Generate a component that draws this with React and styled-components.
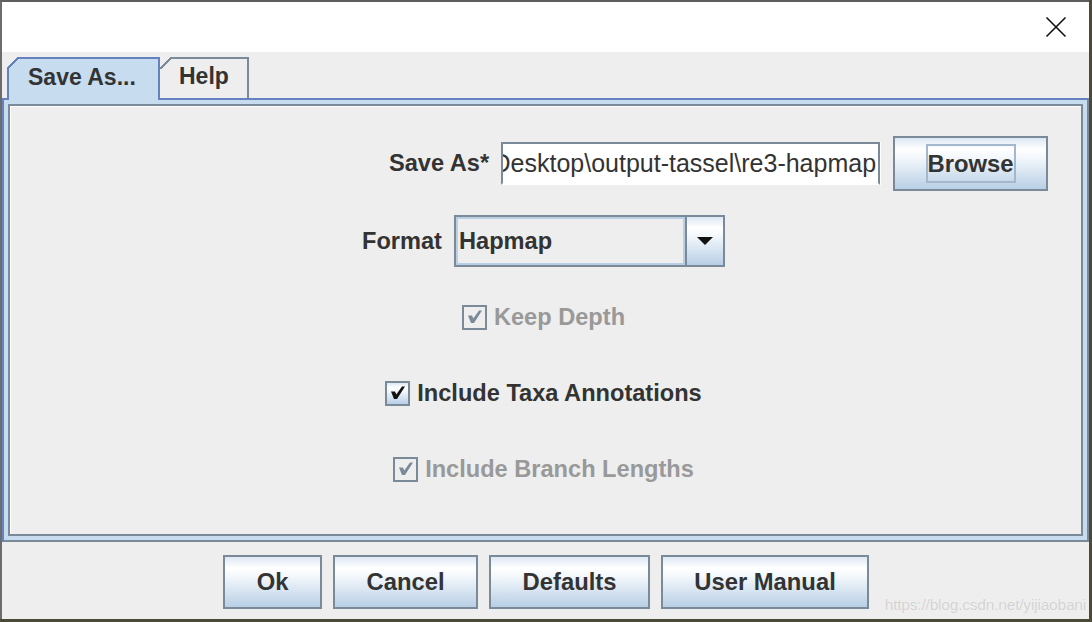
import React from "react";
import styled, { createGlobalStyle } from "styled-components";

const FONT_SIZE = "23.8px";
const LABEL_SIZE = "23.6px";

const GlobalStyle = createGlobalStyle`
  html, body {
    margin: 0;
    padding: 0;
    background-color: #4b4a38;
  }
  body {
    font-family: "Liberation Sans", Arial, sans-serif;
  }
`;

const Page = styled.div`
  position: relative;
  width: 1092px;
  height: 622px;
  overflow: hidden;
`;

const Window = styled.div`
  width: 1087px;
  height: 617px;
  border-left: 2px solid #6c6c6c;
  border-top: 2px solid #5e5e5e;
  background-color: #eeeeee;
  display: flex;
  flex-direction: column;
`;

const TitleBar = styled.div`
  height: 50px;
  background-color: #ffffff;
  display: flex;
  justify-content: flex-end;
  align-items: center;
  padding-right: 21px;
`;

const CloseButton = styled.div`
  width: 24px;
  height: 24px;
  display: flex;
  align-items: center;
  justify-content: center;
`;

const Body = styled.div`
  flex: 1;
  display: flex;
  flex-direction: column;
  padding-top: 5px;
`;

const TabStrip = styled.div`
  height: 41px;
  display: flex;
  align-items: flex-end;
  padding-left: 5px;
  position: relative;
  z-index: 1;
`;

const Tab = styled.div`
  position: relative;
  box-sizing: border-box;
  height: ${p => (p.selected ? "43px" : "41px")};
  margin-bottom: ${p => (p.selected ? "-2px" : "0")};
  width: ${p => p.width}px;
  padding-left: ${p => p.indent}px;
  border: 2px solid ${p => (p.selected ? "#6382bf" : "#7a8a99")};
  border-bottom: none;
  border-left: ${p => (p.selected ? "2px solid #6382bf" : "none")};
  background-color: ${p => (p.selected ? "#c8dcf0" : "#eeeeee")};
  font-weight: bold;
  font-size: 23px;
  color: #333333;
  display: flex;
  align-items: center;
  padding-bottom: 5px;

  &::before {
    content: "";
    position: absolute;
    top: -2px;
    left: ${p => (p.selected ? "-2px" : "0")};
    width: 12px;
    height: 12px;
    background: linear-gradient(
      135deg,
      #eeeeee 0 42%,
      ${p => (p.selected ? "#6382bf" : "#7a8a99")} 42% 58%,
      transparent 58%
    );
  }
`;

const Panel = styled.div`
  height: 444px;
  box-sizing: border-box;
  border: 2px solid #6382bf;
  border-right-color: #7a8a99;
  border-bottom-color: #7a8a99;
  background-color: #c8dcf0;
  padding: 4px;
  display: flex;
`;

const PanelInner = styled.div`
  flex: 1;
  border: 2px solid #7a8a99;
  box-shadow: inset 1px 1px 0 #ffffff;
  background-color: #eeeeee;
  display: flex;
  flex-direction: column;
  padding-top: 19px;
  padding-right: 4px;
`;

const Row = styled.div`
  height: 76px;
  flex-shrink: 0;
  display: flex;
  align-items: center;
  justify-content: center;
  padding-left: ${p => p.shift || 0}px;
  margin-bottom: ${p => p.after || 0}px;
  gap: 12px;
`;

const Label = styled.span`
  font-size: ${LABEL_SIZE};
  font-weight: bold;
  color: #333333;
`;

const TextField = styled.div`
  width: 379px;
  height: 43px;
  box-sizing: border-box;
  border: 2px solid #7a8a99;
  border-bottom-color: #ffffff;
  box-shadow: 1px 0 0 #ffffff;
  background-color: #ffffff;
  overflow: hidden;
  display: flex;
  justify-content: flex-end;
  align-items: center;
  padding-right: 2px;
  white-space: nowrap;
  font-size: 25px;
  color: #333333;
  margin-right: 1px;
`;

const gradient = `linear-gradient(
  to bottom,
  #dde8f3 0%,
  #ffffff 22%,
  #f4f8fc 38%,
  #b8cfe5 100%
)`;

const Button = styled.button`
  box-sizing: border-box;
  height: ${p => p.h || 54}px;
  width: ${p => p.w}px;
  border: 2px solid #7a8a99;
  background: ${gradient};
  font-family: "Liberation Sans", Arial, sans-serif;
  font-weight: bold;
  font-size: ${FONT_SIZE};
  color: #333333;
  padding: 0;
  display: flex;
  align-items: center;
  justify-content: center;
  cursor: pointer;
`;

const FocusRing = styled.span`
  border: 2px solid #a3b8cc;
  padding: 5px 0 4px 0;
  line-height: 26px;
`;

const Combo = styled.div`
  width: 271px;
  height: 52px;
  box-sizing: border-box;
  border: 2px solid #7a8a99;
  display: flex;
`;

const ComboText = styled.div`
  flex: 1;
  border: 2px solid #b8cfe5;
  background-color: #eeeeee;
  display: flex;
  align-items: center;
  padding-left: 1px;
  font-size: ${LABEL_SIZE};
  font-weight: bold;
  color: #333333;
`;

const ComboArrow = styled.div`
  width: 36px;
  border-left: 2px solid #7a8a99;
  background: ${gradient};
  display: flex;
  align-items: center;
  justify-content: center;
`;

const CheckRow = styled.label`
  display: flex;
  align-items: center;
  gap: 7px;
  font-size: ${LABEL_SIZE};
  font-weight: bold;
  color: ${p => (p.disabled ? "#999999" : "#333333")};
`;

const Box = styled.span`
  width: 25px;
  height: 25px;
  box-sizing: border-box;
  border: 2px solid #7a8a99;
  background: ${p => (p.disabled ? "#eeeeee" : gradient)};
  display: flex;
  align-items: center;
  justify-content: center;
`;

const ButtonBar = styled.div`
  display: flex;
  justify-content: center;
  gap: 11px;
  padding-top: 13px;
  padding-left: 1px;
`;

const Watermark = styled.div`
  position: absolute;
  right: 6px;
  bottom: 8px;
  font-family: "Liberation Sans", Arial, sans-serif;
  font-size: 15.5px;
  color: #d2d2d2;
  text-shadow: 0 0 1px #ffffff;
  letter-spacing: -0.2px;
`;

const CheckMark = ({ color }) => (
  <svg width="21" height="21" viewBox="0 0 21 21">
    <path d="M4 8.5 L8 8.5 L9.3 11.5 L15 3.5 L18 3.5 L10 16 L7 16 Z" fill={color} />
  </svg>
);

const CheckBox = ({ label, disabled }) => (
  <CheckRow disabled={disabled}>
    <Box disabled={disabled}>
      <CheckMark color={disabled ? "#7a8a99" : "#111111"} />
    </Box>
    {label}
  </CheckRow>
);

export default function App() {
  return (
    <Page>
      <GlobalStyle />
      <Window>
        <TitleBar>
          <CloseButton>
            <svg width="22" height="22" viewBox="0 0 22 22">
              <path
                d="M1.5 1.5 L20.5 20.5 M20.5 1.5 L1.5 20.5"
                stroke="#111111"
                strokeWidth="1.6"
              />
            </svg>
          </CloseButton>
        </TitleBar>
        <Body>
          <TabStrip>
            <Tab selected width={153} indent={19}>
              Save As...
            </Tab>
            <Tab width={89} indent={19}>
              Help
            </Tab>
          </TabStrip>
          <Panel>
            <PanelInner>
              <Row shift={350} after={2}>
                <Label>Save As*</Label>
                <TextField>C:\Users\Administrator\Desktop\output-tassel\re3-hapmap</TextField>
                <Button w={155} h={55}>
                  <FocusRing>Browse</FocusRing>
                </Button>
              </Row>
              <Row>
                <Label>Format</Label>
                <Combo>
                  <ComboText>Hapmap</ComboText>
                  <ComboArrow>
                    <svg width="16" height="9" viewBox="0 0 16 9">
                      <path d="M0 0 L16 0 L8 8 Z" fill="#111111" />
                    </svg>
                  </ComboArrow>
                </Combo>
              </Row>
              <Row>
                <CheckBox label="Keep Depth" disabled />
              </Row>
              <Row>
                <CheckBox label="Include Taxa Annotations" />
              </Row>
              <Row>
                <CheckBox label="Include Branch Lengths" disabled />
              </Row>
            </PanelInner>
          </Panel>
          <ButtonBar>
            <Button w={99}>Ok</Button>
            <Button w={145}>Cancel</Button>
            <Button w={161}>Defaults</Button>
            <Button w={208}>User Manual</Button>
          </ButtonBar>
        </Body>
      </Window>
      <Watermark>https://blog.csdn.net/yijiaobani</Watermark>
    </Page>
  );
}
